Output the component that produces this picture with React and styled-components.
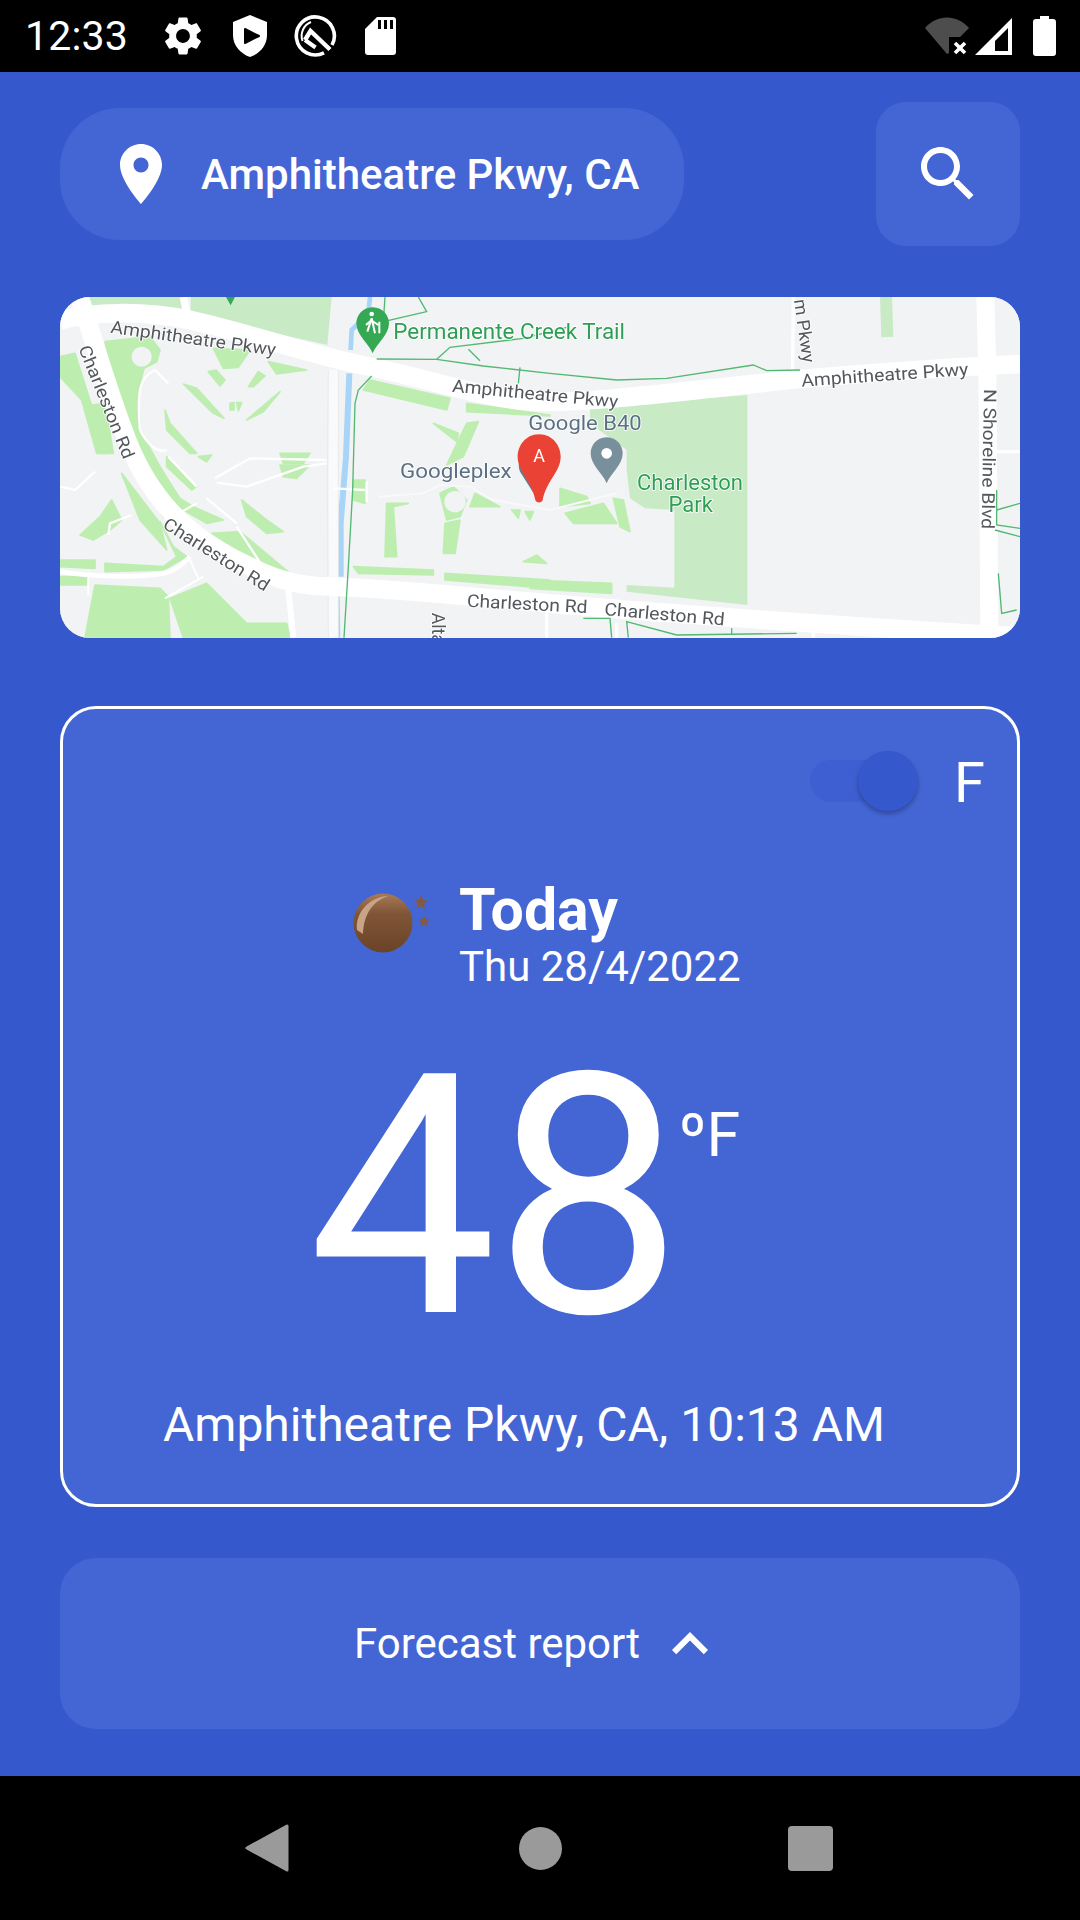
import React from "react";
import styled, { createGlobalStyle } from "styled-components";

const Global = createGlobalStyle`
  html, body { margin: 0; padding: 0; background: #3558cd; }
  * { box-sizing: border-box; }
  #root { width: 1080px; height: 1920px; }
`;

const Page = styled.div`
  width: 1080px; height: 1920px; display: flex; flex-direction: column;
  font-family: Roboto, "Liberation Sans", sans-serif; color: #fff; background: #3558cd; overflow: hidden;
`;
const StatusBar = styled.div`
  height: 72px; flex: none; background: #000; display: flex; align-items: center; padding: 0 24px 0 25px;
`;
const Time = styled.span`font-size: 41px; line-height: 72px; width: 135px; letter-spacing: 0.2px;`;
const StatusIcons = styled.div`display: flex; align-items: center; gap: ${p => p.$gap}px; `;
const Spacer = styled.div`flex: 1;`;
const Glyph = styled.svg`display: block; flex: none;`;
const BatterySlot = styled.div`margin-left: 15px;`;

const Main = styled.main`
  flex: 1; padding: 30px 60px 0; display: flex; flex-direction: column;
`;
const Header = styled.div`display: flex; align-items: center; justify-content: space-between;`;
const LocationPill = styled.div`
  width: 624px; height: 132px; border-radius: 60px; background: #4466d5;
  display: flex; align-items: center; padding-left: 45px; gap: 24px;
`;
const LocationText = styled.span`font-size: 42px; font-weight: 500;`;
const SearchButton = styled.div`
  width: 144px; height: 144px; border-radius: 30px; background: #4466d5;
  display: flex; align-items: center; justify-content: center;
`;
const MapFrame = styled.div`
  margin-top: 51px; height: 341px; border-radius: 30px; overflow: hidden; background: #f1f3f4;
`;
const MapSvg = styled.svg`display: block; filter: blur(0.5px); font-family: Roboto, sans-serif;`;

const Card = styled.section`
  margin-top: 68px; height: 801px; border: 3px solid #fff; border-radius: 36px; background: #4466d5;
  display: flex; flex-direction: column; padding: 0 32px 0 0;
`;
const UnitRow = styled.div`
  height: 72px; margin-top: 36px; display: flex; justify-content: flex-end; align-items: center; gap: 36px;
`;
const Toggle = styled.div`
  position: relative; width: 108px; height: 42px; border-radius: 21px; background: #3d5fd2;
`;
const Thumb = styled.div`
  position: absolute; right: 0; top: -9px; width: 60px; height: 60px; border-radius: 50%;
  background: #3558cd; box-shadow: 0 3px 5px rgba(0,0,0,.28);
`;
const UnitLabel = styled.span`font-size: 56px; line-height: 72px; margin-top: 3px;`;
const TodayRow = styled.div`
  margin-top: 60px; display: flex; align-items: flex-start; padding-left: 289px; gap: 29px;
`;
const WeatherSlot = styled.div`margin-top: 13px;`;
const TodayText = styled.div`display: flex; flex-direction: column;`;
const TodayTitle = styled.span`font-size: 59px; font-weight: 700; line-height: 66px;`;
const TodayDate = styled.span`font-size: 42px; line-height: 48px;`;
const TempRow = styled.div`
  margin-top: 46px; height: 320px; display: flex; padding-left: 245px;
`;
const TempValue = styled.span`font-size: 336px; line-height: 320px; letter-spacing: -3px;`;
const TempUnit = styled.span`font-size: 61px; line-height: 76px; margin-top: 60px; margin-left: -1px;`;
const CardFooter = styled.div`
  margin-top: 38px; padding-left: 100px; font-size: 48px; line-height: 60px; white-space: nowrap;
`;
const ForecastBar = styled.div`
  margin-top: 51px; height: 171px; border-radius: 36px; background: #4466d5;
  display: flex; align-items: center; justify-content: center; gap: 14px;
`;
const ForecastText = styled.span`font-size: 42px;`;
const NavBar = styled.nav`
  height: 144px; flex: none; background: #000; display: flex; align-items: center; padding-left: 245px; gap: 0;
`;
const NavSlot = styled.div`width: ${p => p.$w}px; flex: none; display: flex;`;
const NavCircle = styled.div`width: 43px; height: 43px; border-radius: 50%; background: #9a9a9a;`;
const NavSquare = styled.div`width: 45px; height: 45px; border-radius: 4px; background: #9a9a9a;`;

const P = {
  place: "M12 2C8.13 2 5 5.13 5 9c0 5.25 7 13 7 13s7-7.75 7-13c0-3.87-3.13-7-7-7zm0 9.5c-1.38 0-2.5-1.12-2.5-2.5s1.12-2.5 2.5-2.5 2.5 1.12 2.5 2.5-1.12 2.5-2.5 2.5z",
  search: "M15.5 14h-.79l-.28-.27C15.41 12.59 16 11.11 16 9.5 16 5.91 13.09 3 9.5 3S3 5.91 3 9.5 5.91 16 9.5 16c1.61 0 3.09-.59 4.23-1.57l.27.28v.79l5 4.99L20.49 19l-4.99-5zm-6 0C7.01 14 5 11.99 5 9.5S7.01 5 9.5 5 14 7.01 14 9.5 11.99 14 9.5 14z",
  up: "M12 8l-6 6 1.41 1.41L12 10.83l4.59 4.58L18 14z",
  gear: "M19.14 12.94c.04-.3.06-.61.06-.94 0-.32-.02-.64-.07-.94l2.03-1.58c.18-.14.23-.41.12-.61l-1.92-3.32c-.12-.22-.37-.29-.59-.22l-2.39.96c-.5-.38-1.03-.7-1.62-.94l-.36-2.54c-.04-.24-.24-.41-.48-.41h-3.84c-.24 0-.43.17-.47.41l-.36 2.54c-.59.24-1.13.57-1.62.94l-2.39-.96c-.22-.08-.47 0-.59.22L2.74 8.87c-.12.21-.08.47.12.61l2.03 1.58c-.05.3-.09.63-.09.94s.02.64.07.94l-2.03 1.58c-.18.14-.23.41-.12.61l1.92 3.32c.12.22.37.29.59.22l2.39-.96c.5.38 1.03.7 1.62.94l.36 2.54c.05.24.24.41.48.41h3.84c.24 0 .44-.17.47-.41l.36-2.54c.59-.24 1.13-.56 1.62-.94l2.39.96c.22.08.47 0 .59-.22l1.92-3.32c.12-.22.07-.47-.12-.61l-2.01-1.58zM12 15.6c-1.98 0-3.6-1.62-3.6-3.6s1.62-3.6 3.6-3.6 3.6 1.62 3.6 3.6-1.62 3.6-3.6 3.6z",
};

const Icon = ({ d, size = 72 }) => (
  <Glyph width={size} height={size} viewBox="0 0 24 24" fill="#fff"><path d={d} /></Glyph>
);

const ShieldPlay = () => (
  <Glyph width="34" height="42" viewBox="0 0 34 42">
    <path fill="#fff" d="M17 0 L34 7 V20 C34 31 26 39 17 42 C8 39 0 31 0 20 V7 Z" />
    <path fill="#000" stroke="#000" strokeWidth="2" strokeLinejoin="round" d="M12 14 L26 21 L12 28 Z" />
  </Glyph>
);
const QIcon = () => (
  <Glyph width="44" height="44" viewBox="0 0 44 44" fill="none" stroke="#fff">
    <path d="M30 38.8 A19 19 0 1 1 38 31" strokeWidth="3.6" />
    <path d="M8.5 27 A15 15 0 0 1 17 8" strokeWidth="2" />
    <path d="M11 26 L16.5 17 L36 35.5" strokeWidth="4.4" />
    <path d="M11 26 L21.5 33.5" strokeWidth="4" />
  </Glyph>
);
const SdIcon = () => (
  <Glyph width="31" height="38" viewBox="0 0 31 38">
    <path fill="#fff" d="M12 0 H28 A3 3 0 0 1 31 3 V35 A3 3 0 0 1 28 38 H3 A3 3 0 0 1 0 35 V12 Z" />
    <path fill="#000" d="M13 3h3v9h-3zM19 3h3v9h-3zM25 3h3v9h-3z" />
  </Glyph>
);
const WifiOff = () => (
  <Glyph width="44" height="38" viewBox="0 0 44 38">
    <path fill="#4d4d4d" d="M0 11 C12 -3 32 -3 44 11 L35 20 H24 V36 L22 37 Z" />
    <path stroke="#fff" strokeWidth="3.6" d="M30 26 L40 36 M40 26 L30 36" />
  </Glyph>
);
const Signal = () => (
  <Glyph width="37" height="38" viewBox="0 0 37 38">
    <path fill="#fff" fillRule="evenodd" d="M37 1 V38 H0 Z M33 11 L20 24 V34 H33 Z" />
  </Glyph>
);
const Battery = () => (
  <Glyph width="23" height="40" viewBox="0 0 23 40">
    <path fill="#fff" d="M7 0 H16 V3 H20 A3 3 0 0 1 23 6 V37 A3 3 0 0 1 20 40 H3 A3 3 0 0 1 0 37 V6 A3 3 0 0 1 3 3 H7 Z" />
  </Glyph>
);

const G = "#bdeeb0";
const Z3 = 1440;
const shift = (pts) => pts.map(([x, y]) => `${x + Z3},${y}`).join(" ");
const Greens = [
  "165,155 300,140 330,180 320,215 282,235 265,300 270,420 330,530 405,650 340,680 260,560 190,340",
  "490,175 600,180 565,232 520,235",
  "655,215 770,240 680,252",
  "475,245 498,240 525,270 510,288",
  "595,290 625,245 645,258 610,290",
  "590,390 690,305 640,365",
  "400,282 440,295 522,385 490,370",
  "540,340 552,338 552,360 540,360",
  "560,338 575,338 565,362",
  "345,360 360,400 440,490 420,490 350,420",
  "445,500 485,495 470,515",
  "350,500 440,590 425,600 350,530",
  "350,600 430,650 520,690 470,700 365,640",
  "575,630 650,690 700,725 650,730 590,680",
  "485,730 570,725 720,850 640,830",
  "30,200 75,190 170,490 140,490 95,330 30,260",
  "125,345 165,340 190,490 155,490",
  "690,490 780,490 760,520 700,520",
  "690,525 780,525 740,565 700,560",
  "30,810 135,810 135,835 30,830",
  "165,820 340,830 380,800 330,695 370,770 410,800 340,840 165,845",
  "90,735 150,680 185,630 215,690 180,720 130,750",
  "30,860 110,860 110,885 30,885",
  "135,885 330,895 355,920 360,1043 105,1043",
  "360,925 470,880 550,960 590,1000 710,1000 720,1043 400,1043",
  "215,550 330,700 350,780 270,690",
  "960,270 1200,325 1190,360 940,300",
  "1250,340 1500,375 1500,378 1250,365",
  "1150,400 1225,430 1220,455",
  "1250,400 1285,395 1240,500 1190,525",
  "1170,610 1210,590 1250,630 1230,680 1190,690",
  "1260,650 1275,610 1350,650",
  "1185,700 1230,690 1215,790 1180,790",
  "1385,660 1410,660 1405,685",
  "1425,665 1450,665 1440,690",
  "910,830 1150,840 1150,855 925,850",
  "1185,850 1500,870 1500,895 1185,870",
  "1010,640 1075,640 1030,650 1040,800 1005,800",
  "1420,815 1460,795 1490,820",
  "910,570 945,570 945,640 910,630",
  "1530,595 1610,620 1620,640 1530,650",
  "1545,670 1660,640 1700,700 1570,700",
  "1690,625 1720,630 1740,725 1710,710",
  "1440,870 1685,880 1685,910 1440,895",
];

const Road = styled.path`fill: none; stroke: ${p => p.$c || "#fff"}; stroke-width: ${p => p.$w}px; stroke-linecap: ${p => p.$cap || "butt"};`;
const Trail = styled.path`fill: none; stroke: #52b872; stroke-width: ${p => p.$w || 4}px;`;
const GreenPatch = styled.polygon`fill: ${G}; stroke: ${G}; stroke-width: 5px; stroke-linejoin: round;`;
const Label = styled.text`
  fill: ${p => p.$c || "#54585c"}; font-size: ${p => p.$s || 53}px; stroke: #fff; stroke-width: 5px; paint-order: stroke; stroke-linejoin: round;
`;

const MapArt = () => (
  <MapSvg width="960" height="341" viewBox="30 21 2880 1023">
    <rect x="30" y="21" width="2880" height="1023" fill="#f1f3f4" />
    {/* parks */}
    <polygon fill="#c8ebc6" points="115,21 398,21 398,68 422,68 422,21 845,21 832,165 420,72 300,52 115,72" />
    <polygon fill="#c8ebc6" points={shift([[180,350],[652,315],[652,945],[290,905],[290,885],[433,893],[433,660],[345,655],[300,625],[290,540],[290,480],[180,400]])} />
    <rect x={Z3 + 1052} y="21" width="36" height="120" fill="#c8ebc6" transform={`rotate(-2 ${Z3 + 1070} 80)`} />
    {Greens.map((g, i) => <GreenPatch key={i} points={g} />)}
    <circle cx="275" cy="200" r="30" fill="#f1f3f4" />
    <circle cx="1215" cy="635" r="32" fill="#f1f3f4" />
    {/* water */}
    <Road $c="#a8d4f7" $w={14} d="M960,21 L955,70 L905,120 L902,180" />
    <Road $c="#a8d4f7" $w={18} d="M898,250 L888,500 L872,700 L872,860" />
    <Road $c="#a8d4f7" $w={18} d="M860,920 L862,1043" />
    {/* minor roads */}
    <Road $c="#f9fafa" $w={28} d="M850,240 L850,1043" />
    <Road $c="#e8eaeb" $w={3} d="M835,240 L832,570 L835,1043 M865,240 L865,1043" />
    <Road $w={7} d="M270,420 C260,300 270,260 315,240 L355,280" />
    <Road $w={7} d="M270,420 C290,460 320,490 350,480" />
    <Road $w={7} d="M355,500 L440,590 M470,625 L560,700 M560,710 L635,825 M395,665 L440,640" />
    <Road $w={7} d="M495,565 L600,505 L830,510 M500,578 L590,590 L760,530 L830,520" />
    <Road $w={7} d="M175,735 L180,700 L245,675 M30,590 L75,600 L135,545" />
    <Road $w={7} d="M850,595 L945,600 M950,575 L950,635" />
    <Road $c="#f8f9fa" $w={6} d="M985,620 L1120,610 L1170,585 L1260,590 L1330,630 L1500,660 L1700,610" />
    <Road $w={14} d="M30,845 C120,860 260,865 340,850 C370,845 390,830 420,800" />
    <Road $w={6} d="M345,925 L460,860 M420,810 L445,865 M115,860 L115,915" />
    <Road $w={22} d="M400,21 L410,70" />
    <Road $w={18} d="M715,900 L730,1043" />
    <Road $w={10} d="M2290,1020 L2290,1043 M1490,950 L1490,1043 M1700,1000 L1700,1043 M2230,21 L2228,240" />
    <Road $w={22} d="M2800,21 L2800,210" />
    <Road $w={10} d="M2840,485 L2910,485" />
    {/* main roads */}
    <Road $w={56} d="M30,92 C120,65 280,60 420,90 C600,130 800,200 950,228 C1150,270 1300,325 1450,335 C1600,340 1800,315 2240,268 C2500,245 2700,232 2910,222" />
    <Road $w={56} d="M88,21 C120,110 160,260 220,420 C280,590 380,720 560,810 C640,850 700,880 800,888 C1000,893 1200,915 1440,935 C1700,960 2400,1010 2910,1040" />
    <Road $w={54} d="M2806,21 L2812,240 L2815,600 L2818,1043" />
    {/* trails */}
    <Trail d="M1005,21 L1000,95 L1130,65 L1105,21" />
    <Trail d="M915,340 L925,300 L965,258" />
    <Trail d="M915,340 L908,600 L895,830 L882,1043" />
    <Trail d="M980,207 L1160,208 L1300,228 L1500,250 L1700,270 L1850,265 L2110,225 L2150,242 L2250,240" />
    <Trail d="M1160,208 L1200,172 L1420,145 L1560,110 M1255,178 L1290,212 M1410,232 L1405,280" />
    <Trail d="M1600,985 L1680,985 L1685,1043 M1735,1043 L1730,995 L1880,1035 L2240,1030 M2045,1015 L2045,1035" />
    <Trail d="M2840,600 L2840,705 L2910,715 M2835,720 L2910,740 M2840,660 L2910,640 M2845,850 L2855,970 L2900,960" />
    {/* markers */}
    <path fill="#34a853" d="M968,52 C1000,52 1017,78 1017,100 C1017,135 980,160 968,190 C956,160 919,135 919,100 C919,78 936,52 968,52 Z" />
    <path fill="none" stroke="#fff" strokeWidth="6" d="M965,85 L952,125 M965,85 L975,130 M965,90 L948,105 M965,92 L985,105 M988,95 L988,130" />
    <circle cx="965" cy="72" r="7" fill="#fff" />
    <path fill="#34a853" d="M528,21 H555 L542,46 Z" />
    <path fill="#5f7f93" d="M1440,480 C1410,490 1400,520 1410,545 L1450,608 L1470,600 L1470,500 Z" />
    <path fill="#78909c" d="M1670,442 C1702,442 1718,468 1718,490 C1718,525 1682,550 1670,580 C1658,550 1622,525 1622,490 C1622,468 1638,442 1670,442 Z" />
    <circle cx="1670" cy="490" r="16" fill="#fff" />
    <path fill="#ea4335" d="M1467,433 C1510,433 1532,470 1532,500 C1532,545 1490,570 1478,630 C1476,640 1458,640 1456,630 C1444,570 1403,545 1403,500 C1403,470 1425,433 1467,433 Z" />
    <text x="1467" y="516" fontSize="54" fill="#fff" textAnchor="middle">A</text>
    {/* labels */}
    <Label transform="translate(180,128) rotate(8)" textLength="500" lengthAdjust="spacingAndGlyphs">Amphitheatre Pkwy</Label>
    <Label transform="translate(1205,305) rotate(5.5)" textLength="500" lengthAdjust="spacingAndGlyphs">Amphitheatre Pkwy</Label>
    <Label transform="translate(2255,290) rotate(-4)" textLength="502" lengthAdjust="spacingAndGlyphs">Amphitheatre Pkwy</Label>
    <Label transform="translate(85,175) rotate(68)" textLength="362" lengthAdjust="spacingAndGlyphs">Charleston Rd</Label>
    <Label transform="translate(335,712) rotate(32)" textLength="365" lengthAdjust="spacingAndGlyphs">Charleston Rd</Label>
    <Label transform="translate(1250,950) rotate(3)" textLength="362" lengthAdjust="spacingAndGlyphs">Charleston Rd</Label>
    <Label transform="translate(1662,975) rotate(5)" textLength="362" lengthAdjust="spacingAndGlyphs">Charleston Rd</Label>
    <Label transform="translate(2232,30) rotate(82)" textLength="192" lengthAdjust="spacingAndGlyphs">m Pkwy</Label>
    <Label transform="translate(2802,297) rotate(91)" textLength="420" lengthAdjust="spacingAndGlyphs">N Shoreline Blvd</Label>
    <Label transform="translate(1147,968) rotate(90)">Alta</Label>
    <Label x="1050" y="565" $c="#5b7083" $s={62} textLength="335" lengthAdjust="spacingAndGlyphs">Googleplex</Label>
    <Label x="1435" y="420" $c="#5b7083" $s={62} textLength="340" lengthAdjust="spacingAndGlyphs">Google B40</Label>
    <Label x="1030" y="148" $c="#2f9e55" $s={64} textLength="695" lengthAdjust="spacingAndGlyphs">Permanente Creek Trail</Label>
    <Label x="1920" y="600" $c="#2f9e55" $s={66} textAnchor="middle">Charleston</Label>
    <Label x="1922" y="665" $c="#2f9e55" $s={66} textAnchor="middle">Park</Label>
  </MapSvg>
);

const WeatherIcon = () => (
  <Glyph width="78" height="66" viewBox="0 0 78 66">
    <defs>
      <linearGradient id="ballBody" x1="0" y1="0" x2="0" y2="1">
        <stop offset="0%" stopColor="#a87a57" />
        <stop offset="35%" stopColor="#7f5536" />
        <stop offset="100%" stopColor="#6a4428" />
      </linearGradient>
    </defs>
    <circle cx="31" cy="33" r="29.5" fill="url(#ballBody)" />
    <path d="M5 40 C3 24 16 7 36 6 C22 11 12 22 11 44 Z" fill="#c9a386" />
    <path d="M69 5 l2 5 5 .5 -4 3.5 1.5 5 -4.5 -2.7 -4.5 2.7 1.5 -5 -4 -3.5 5 -.5 Z" fill="#85593f" />
    <path d="M72 25 l1.6 4 4 .4 -3 3 1.2 4 -3.8 -2.2 -3.8 2.2 1.2 -4 -3 -3 4 -.4 Z" fill="#85593f" />
  </Glyph>
);

export default function App() {
  return (
    <Page>
      <Global />
      <StatusBar>
        <Time>12:33</Time>
        <StatusIcons $gap={27}>
          <Icon d={P.gear} size={46} />
          <ShieldPlay />
          <QIcon />
          <SdIcon />
        </StatusIcons>
        <Spacer />
        <StatusIcons $gap={6}>
          <WifiOff />
          <Signal />
          <BatterySlot><Battery /></BatterySlot>
        </StatusIcons>
      </StatusBar>
      <Main>
        <Header>
          <LocationPill>
            <Icon d={P.place} />
            <LocationText>Amphitheatre Pkwy, CA</LocationText>
          </LocationPill>
          <SearchButton><Icon d={P.search} /></SearchButton>
        </Header>
        <MapFrame><MapArt /></MapFrame>
        <Card>
          <UnitRow>
            <Toggle><Thumb /></Toggle>
            <UnitLabel>F</UnitLabel>
          </UnitRow>
          <TodayRow>
            <WeatherSlot><WeatherIcon /></WeatherSlot>
            <TodayText>
              <TodayTitle>Today</TodayTitle>
              <TodayDate>Thu 28/4/2022</TodayDate>
            </TodayText>
          </TodayRow>
          <TempRow>
            <TempValue>48</TempValue>
            <TempUnit>ºF</TempUnit>
          </TempRow>
          <CardFooter>Amphitheatre Pkwy, CA, 10:13 AM</CardFooter>
        </Card>
        <ForecastBar>
          <ForecastText>Forecast report</ForecastText>
          <Icon d={P.up} />
        </ForecastBar>
      </Main>
      <NavBar>
        <NavSlot $w={274}>
          <Glyph width="44" height="48" viewBox="0 0 44 48">
            <path fill="#9a9a9a" stroke="#9a9a9a" strokeWidth="3" strokeLinejoin="round" d="M42 2 V46 L2 24 Z" />
          </Glyph>
        </NavSlot>
        <NavSlot $w={269}><NavCircle /></NavSlot>
        <NavSlot $w={45}><NavSquare /></NavSlot>
      </NavBar>
    </Page>
  );
}
